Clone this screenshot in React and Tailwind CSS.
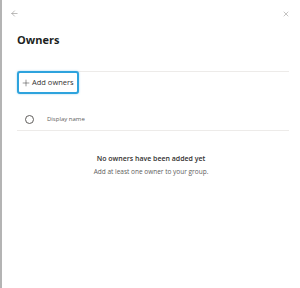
import { ArrowLeft, X, Plus } from "lucide-react";

const App = () => {
  return (
    <div
      className="w-[300px] h-[288px] bg-white border-l-2 border-[#b4b4b4] relative overflow-hidden"
      style={{ fontFamily: '"Open Sans", "Noto Sans", sans-serif' }}
    >
      {/* Top bar */}
      <div className="flex items-center justify-between pl-[8px] pr-[10px] pt-[7px] h-[20px]">
        <ArrowLeft className="w-[9px] h-[9px] text-[#8a8886]" strokeWidth={1.5} />
        <X className="w-[8px] h-[8px] text-[#8a8886]" strokeWidth={1.5} />
      </div>

      {/* Title */}
      <div className="pl-[15px] pt-[13px] h-[51px]">
        <h2 className="text-[11px] font-bold text-[#201f1e] leading-[14px]">Owners</h2>
      </div>

      {/* Command bar */}
      <div className="ml-[15px] mr-[11px] border-t border-[#edebe9] relative">
        <button className="absolute -top-px left-0 w-[62px] h-[23px] border-2 border-[#2ea3dd] rounded-[3px] flex items-center gap-[1px] pl-[2px] bg-white shadow-[0_0_2px_rgba(46,163,221,0.5)]">
          <Plus className="w-[10px] h-[10px] text-[#323130]" strokeWidth={1.2} />
          <span className="text-[7.5px] text-[#323130] leading-none">Add owners</span>
        </button>
      </div>

      {/* List header */}
      <div className="ml-[15px] mr-[11px] mt-[37px] h-[22px] flex items-center border-b border-[#edebe9]">
        <span className="ml-[8px] w-[9px] h-[9px] rounded-full border border-[#605e5c]" />
        <span className="ml-[13px] text-[6px] text-[#605e5c]">Display name</span>
      </div>

      {/* Empty state */}
      <div className="flex flex-col items-center mt-[23px]">
        <p className="text-[7px] font-semibold text-[#323130] leading-[10px]">No owners have been added yet</p>
        <p className="mt-[3px] text-[6.5px] text-[#605e5c] leading-[10px]">Add at least one owner to your group.</p>
      </div>
    </div>
  );
};

export default App;
